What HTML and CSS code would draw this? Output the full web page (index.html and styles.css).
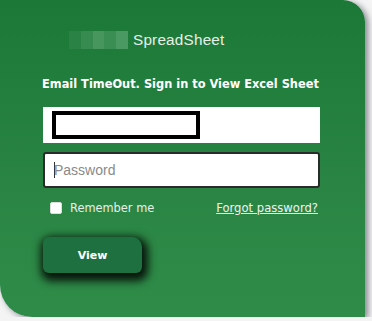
FILE: index.html
```html
<!DOCTYPE html>
<html lang="en">

  <head>
    <meta charset="UTF-8">
    <title>SpreadSheet</title>
    <link rel="stylesheet" href="styles.css">
  </head>

  <body>
    <div class="card">
      <div class="brand">
        <div class="logo">
          <span></span><span></span><span></span><span></span><span></span>
        </div>
        <span class="brand-name">SpreadSheet</span>
      </div>

      <h1 class="title">Email TimeOut. Sign in to View Excel Sheet</h1>

      <form class="login">
        <div class="field email">
          <div class="masked"></div>
        </div>
        <div class="field password">
          <span class="caret"></span>
          <span class="placeholder">Password</span>
        </div>

        <div class="options">
          <label class="remember">
            <span class="box"></span>
            Remember me
          </label>
          <a class="forgot" href="#">Forgot password?</a>
        </div>

        <button class="view" type="button">View</button>
      </form>
    </div>
  </body>

</html>
```

FILE: styles.css
```css
* {
  box-sizing: border-box;
  font-family: 'DejaVu Sans', 'Liberation Sans', sans-serif;
}

body {
  margin: 0;
  background: #f4f4f4;
  overflow: hidden;
}

.card {
  width: 365px;
  height: 317px;
  background: linear-gradient(180deg, #1b7836 0%, #2a8544 60%, #2f8c48 100%);
  border-radius: 0 22px 0 32px;
  box-shadow: 3px 2px 6px rgba(40, 40, 60, 0.55);
  padding: 31px 0 0 43px;
  display: flex;
  flex-direction: column;
}

.brand {
  display: flex;
  align-items: center;
  gap: 5px;
  padding-left: 26px;
  height: 18px;
}

.logo {
  display: flex;
  width: 59px;
  height: 18px;
}

.logo span {
  flex: 1;
  background: #3c8f55;
}

.logo span:nth-child(1) {
  background: #2a8244;
}

.logo span:nth-child(2) {
  background: #378b51;
}

.logo span:nth-child(3) {
  background: #46965e;
}

.logo span:nth-child(4) {
  background: #3a8d53;
}

.logo span:nth-child(5) {
  background: #4a9962;
}

.brand-name {
  color: #e6efe8;
  font-family: 'Liberation Sans', sans-serif;
  font-size: 15.3px;
  letter-spacing: 0.2px;
}

.title {
  margin: 28px 0 0 -1px;
  color: #ffffff;
  font-size: 11.4px;
  font-weight: bold;
  letter-spacing: 0;
  height: 14px;
  line-height: 14px;
}

.login {
  margin-top: 16px;
  width: 277px;
  display: flex;
  flex-direction: column;
}

.field {
  height: 36px;
  background: #fff;
  display: flex;
  align-items: center;
}

.email {
  padding-left: 9px;
}

.masked {
  width: 148px;
  height: 28px;
  border: 4px solid #000;
}

.password {
  margin-top: 9px;
  border: 2px solid #2b2b2b;
  border-radius: 3px;
  padding-left: 9px;
}

.caret {
  width: 1px;
  height: 16px;
  background: #333;
  margin-right: -1px;
}

.placeholder {
  color: #8a8a8a;
  font-family: 'Liberation Sans', sans-serif;
  font-size: 14px;
}

.options {
  margin-top: 12px;
  padding: 0 2px 0 7px;
  display: flex;
  justify-content: space-between;
  align-items: center;
  height: 16px;
}

.remember {
  display: flex;
  align-items: center;
  gap: 8px;
  color: #e8efe9;
  font-size: 11.4px;
}

.box {
  width: 12px;
  height: 12px;
  background: #fff;
  border-radius: 2px;
  border: 1px solid #ddd;
}

.forgot {
  color: #f2f2f2;
  font-size: 11.6px;
  text-decoration: underline;
}

.view {
  margin-top: 21px;
  width: 99px;
  height: 36px;
  border: none;
  border-radius: 6px 10px 6px 6px;
  background: #1f7040;
  color: #fff;
  font-size: 11px;
  font-weight: bold;
  box-shadow: 2px 4px 9px 4px rgba(0, 0, 0, 0.85);
  padding: 0;
}
```
